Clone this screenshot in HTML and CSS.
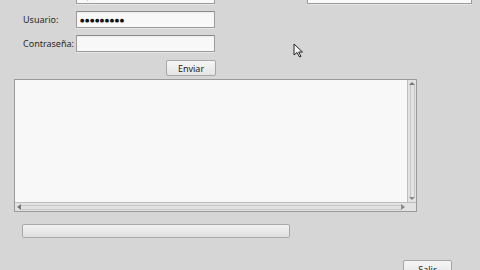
FILE: index.html
```html
<!DOCTYPE html>
<html>
<head>
<meta charset="utf-8">
<link rel="stylesheet" href="styles.css">
</head>
<body>
<div class="window">
  <div class="form">
    <div class="row top">
      <span class="label">Servidor:</span>
      <div class="field"><span class="faint">ftp.servidor.com</span></div>
      <span class="label right-label">Directorio remoto:</span>
      <div class="field wide"><span class="faint">/home/user</span></div>
    </div>
    <div class="row">
      <span class="label">Usuario:</span>
      <div class="field"><span class="dots">●●●●●●●●●</span></div>
    </div>
    <div class="row">
      <span class="label">Contraseña:</span>
      <div class="field"></div>
    </div>
    <div class="row btnrow">
      <button class="btn enviar">Enviar</button>
    </div>
  </div>
  <div class="textarea">
    <div class="content"></div>
    <div class="vscroll">
      <span class="arrow up"></span>
      <span class="track"></span>
      <span class="arrow down"></span>
    </div>
    <div class="hscroll">
      <span class="arrow left"></span>
      <span class="htrack"></span>
      <span class="arrow right"></span>
    </div>
  </div>
  <div class="progress"><div class="fill"></div></div>
  <div class="bottom">
    <button class="btn salir">Salir</button>
  </div>
  <svg class="cursor" width="12" height="16" viewBox="0 0 12 16"><path d="M1 1 L1 12 L4 9.5 L6.5 14 L8 13.3 L5.7 9 L9.5 9 Z" fill="#f4f4f4" stroke="#222" stroke-width="1"/></svg>
</div>
</body>
</html>
```
FILE: styles.css
```css
html, body { margin: 0; padding: 0; }
body {
  background: #d6d6d6;
  width: 480px;
  height: 270px;
  overflow: hidden;
  font-family: "Noto Sans", "DejaVu Sans", sans-serif;
  font-size: 9px;
  color: #2a2a2a;
}
.window {
  position: relative;
  width: 480px;
  height: 270px;
}
.form {
  display: flex;
  flex-direction: column;
  gap: 7px;
  padding-left: 23px;
  margin-top: -13px;
}
.row {
  display: flex;
  align-items: center;
  height: 17px;
}
.label {
  width: 53px;
  flex: none;
}
.right-label {
  width: 88px;
  margin-left: 4px;
  color: #555;
}
.field {
  width: 134px;
  height: 15px;
  border: 1px solid #9c9c9c;
  border-top-color: #8a8a8a;
  border-radius: 1px;
  background: linear-gradient(#ececec 0, #f7f7f7 2px, #f8f8f8 100%);
  display: flex;
  align-items: center;
  padding-left: 3px;
  box-sizing: content-box;
  box-shadow: 0 1px 0 #e6e6e6;
  overflow: hidden;
}
.field.wide { width: 160px; }
.faint { color: #bbb; }
.dots {
  font-size: 5px;
  letter-spacing: 0.6px;
  color: #111;
  font-family: "DejaVu Sans", sans-serif;
}
.btnrow {
  height: 16px;
  margin-top: 1px;
  padding-left: 143px;
}
.btn {
  font-family: "Noto Sans", "DejaVu Sans", sans-serif;
  font-size: 9px;
  color: #222;
  background: linear-gradient(#f6f6f6, #e4e4e4);
  border: 1px solid #a6a6a6;
  border-radius: 2px;
  padding: 0;
  margin: 0;
  height: 16px;
  width: 50px;
  line-height: 13px;
}
.textarea {
  margin: 3px 0 0 14px;
  width: 401px;
  height: 131px;
  border: 1px solid #9a9a9a;
  background: #f7f7f7;
  display: grid;
  grid-template-columns: 1fr 9px;
  grid-template-rows: 1fr 9px;
}
.content { background: #f8f8f8; }
.vscroll {
  background: #e2e2e2;
  border-left: 1px solid #bdbdbd;
  display: flex;
  flex-direction: column;
  align-items: center;
}
.hscroll {
  grid-column: 1 / 3;
  background: #e2e2e2;
  border-top: 1px solid #bdbdbd;
  display: flex;
  align-items: center;
}
.track { flex: 1; width: 3px; border-left: 1px solid #c8c8c8; border-right: 1px solid #c8c8c8; }
.htrack { flex: 1; height: 3px; border-top: 1px solid #c8c8c8; border-bottom: 1px solid #c8c8c8; }
.arrow { width: 0; height: 0; flex: none; }
.arrow.up { border: 3px solid transparent; border-bottom: 3px solid #777; border-top: 0; margin-top: 2px; }
.arrow.down { border: 3px solid transparent; border-top: 3px solid #888; border-bottom: 0; margin-bottom: 2px; }
.arrow.left { border: 3px solid transparent; border-right: 4px solid #777; border-left: 0; margin-left: 2px; }
.arrow.right { border: 3px solid transparent; border-left: 4px solid #888; border-right: 0; margin-right: 11px; }
.progress {
  margin: 12px 0 0 22px;
  width: 266px;
  height: 12px;
  border: 1px solid #a9a9a9;
  border-radius: 2px;
  background: linear-gradient(#f1f1f1, #e0e0e0);
}
.bottom {
  display: flex;
  justify-content: flex-end;
  padding-right: 28px;
  margin-top: 22px;
}
.salir { width: 49px; height: 18px; line-height: 15px; }
.cursor {
  position: absolute;
  left: 293px;
  top: 56px;
}
```
